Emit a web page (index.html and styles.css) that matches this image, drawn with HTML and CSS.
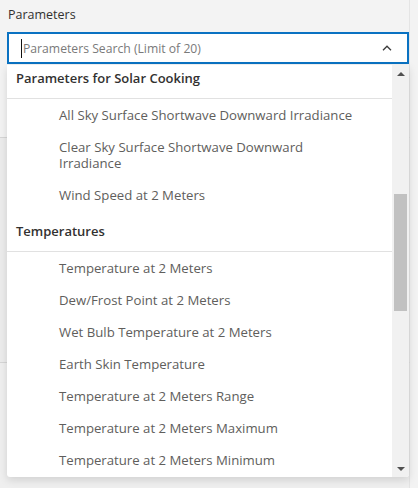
FILE: index.html
```html
<!DOCTYPE html>
<html lang="en">
<head>
    <meta charset="UTF-8">
    <meta name="viewport" content="width=device-width, initial-scale=1.0">
    <title>Parameters</title>
    <link rel="stylesheet" href="styles.css">
</head>
<body>
    <div class="section top">
        <div class="field">
            <label for="paramSearch">Parameters</label>
            <div class="search-box">
                <span class="caret"></span>
                <input id="paramSearch" type="text" placeholder="Parameters Search (Limit of 20)">
                <svg class="chevron" width="10" height="6" viewBox="0 0 10 6">
                    <path d="M1 5.2 L5 1.2 L9 5.2" fill="none" stroke="#3b3b3b" stroke-width="1.3"/>
                </svg>
            </div>

            <div class="menu">
                <div class="list">
                    <div class="list-inner">
                        <div class="group-header">Parameters for Solar Cooking</div>
                        <div class="option">All Sky Surface Shortwave Downward Irradiance</div>
                        <div class="option">Clear Sky Surface Shortwave Downward Irradiance</div>
                        <div class="option">Wind Speed at 2 Meters</div>
                        <div class="group-header">Temperatures</div>
                        <div class="option">Temperature at 2 Meters</div>
                        <div class="option">Dew/Frost Point at 2 Meters</div>
                        <div class="option">Wet Bulb Temperature at 2 Meters</div>
                        <div class="option">Earth Skin Temperature</div>
                        <div class="option">Temperature at 2 Meters Range</div>
                        <div class="option">Temperature at 2 Meters Maximum</div>
                        <div class="option">Temperature at 2 Meters Minimum</div>
                    </div>
                </div>
                <div class="scrollbar">
                    <div class="sb-btn"><span class="arrow-up"></span></div>
                    <div class="sb-track"><div class="sb-thumb"></div></div>
                    <div class="sb-btn"><span class="arrow-down"></span></div>
                </div>
            </div>
        </div>
    </div>
    <div class="section middle"></div>
    <div class="section bottom"></div>
</body>
</html>
```

FILE: styles.css
```css
body {
    font-family: "Open Sans", "Noto Sans", sans-serif;
    font-size: 13px;
    background-color: #f3f3f3;
    margin: 0;
    padding: 0;
    color: #323130;
}
.section {
    width: 409px;
    border-right: 1px solid #e4e4e4;
}
.section.top {
    height: 137px;
    border-bottom: 1px solid #d6d6d6;
}
.section.middle {
    height: 224px;
    background-color: #ececec;
    border-bottom: 1px solid #d6d6d6;
}
.section.bottom {
    height: 125px;
    background-color: #efefef;
}
.field {
    position: relative;
    margin-left: 7px;
    width: 402px;
    padding-top: 5px;
}
.field label {
    display: block;
    margin-left: 1px;
    line-height: 20px;
    height: 27px;
    font-size: 12.5px;
    color: #323130;
}
.search-box {
    display: flex;
    align-items: center;
    height: 28px;
    border: 2px solid #0a72c2;
    background-color: #fff;
    padding: 0 15px 0 12px;
}
.caret {
    width: 1px;
    height: 19px;
    background-color: #111;
    margin-right: 1px;
}
.search-box input {
    flex: 1;
    border: none;
    outline: none;
    padding: 0;
    font-family: inherit;
    font-size: 12.2px;
    background: transparent;
}
.search-box input::placeholder {
    color: #7a7a7a;
}
.chevron {
    display: block;
}
.menu {
    position: absolute;
    top: 65px;
    left: 0;
    right: 0;
    height: 412px;
    display: flex;
    background-color: #fff;
    border-radius: 0 0 3px 3px;
    box-shadow: 0 3px 8px rgba(0, 0, 0, 0.13);
    overflow: hidden;
}
.list {
    flex: 1;
    overflow: hidden;
}
.list-inner {
    margin-top: -7px;
}
.group-header {
    height: 40px;
    line-height: 40px;
    padding-left: 9px;
    font-weight: 600;
    color: #323130;
    border-bottom: 1px solid #e1e1e1;
}
.option {
    padding: 8px 30px 8px 52px;
    line-height: 16px;
    font-size: 13.2px;
    color: #605e5c;
}
.scrollbar {
    width: 17px;
    display: flex;
    flex-direction: column;
    background-color: #f1f1f1;
}
.sb-btn {
    height: 17px;
    display: flex;
    align-items: center;
    justify-content: center;
}
.arrow-up {
    width: 0;
    height: 0;
    border-left: 4px solid transparent;
    border-right: 4px solid transparent;
    border-bottom: 4px solid #505050;
}
.arrow-down {
    width: 0;
    height: 0;
    border-left: 4px solid transparent;
    border-right: 4px solid transparent;
    border-top: 4px solid #505050;
}
.sb-track {
    flex: 1;
    padding: 112px 2px 0 2px;
}
.sb-thumb {
    height: 117px;
    background-color: #c1c1c1;
}
```
